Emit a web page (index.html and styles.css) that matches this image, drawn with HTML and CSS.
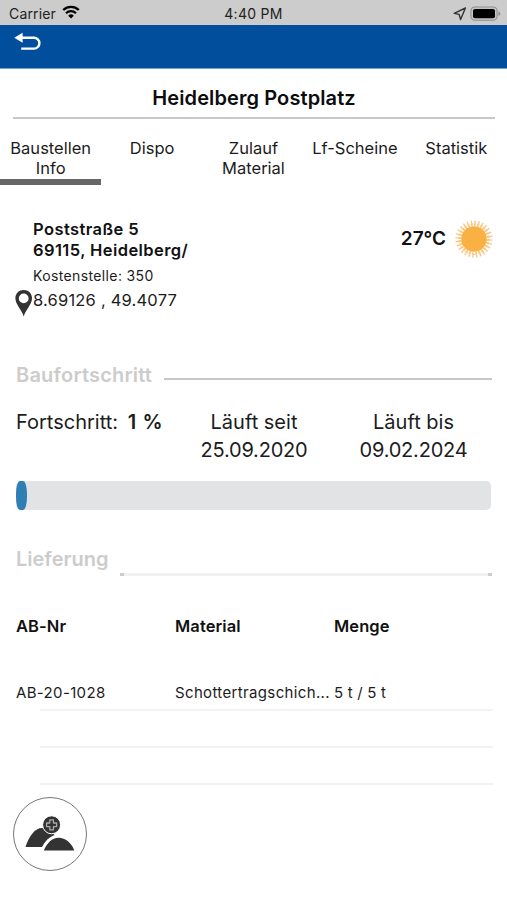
FILE: index.html
```html
<!DOCTYPE html>
<html lang="de">
<head>
    <meta charset="UTF-8">
    <meta name="viewport" content="width=device-width, initial-scale=1.0">
    <title>Heidelberg Postplatz</title>
    <link rel="stylesheet" href="styles.css">
</head>
<body>
    <div class="status-bar">
        <div class="carrier">
            <span>Carrier</span>
            <svg class="wifi" width="18" height="14" viewBox="0 0 18 14">
                <path d="M1.2 5 A11.2 11.2 0 0 1 16.8 5" fill="none" stroke="#000" stroke-width="2.3"/>
                <path d="M4 8.2 A7.2 7.2 0 0 1 14 8.2" fill="none" stroke="#000" stroke-width="2.2"/>
                <path d="M9 13.5 L6.2 10.7 A4 4 0 0 1 11.8 10.7 Z"/>
            </svg>
        </div>
        <span class="clock">4:40 PM</span>
        <div class="battery">
            <svg width="14" height="14" viewBox="0 0 14 14">
                <path d="M12.4 1 L1.2 6.4 L6.2 7.4 L7.6 12.6 Z" fill="none" stroke="#333" stroke-width="1.4" stroke-linejoin="round"/>
            </svg>
            <svg width="31" height="16" viewBox="0 0 31 16">
                <rect x="0.9" y="1" width="26.2" height="13.2" rx="4" fill="#c4c4c4" stroke="#8f8f8f" stroke-width="1.1"/>
                <rect x="3" y="3" width="22" height="9.2" rx="2"/>
                <path d="M28.4 5.2 Q30.4 6 30.4 7.6 Q30.4 9.2 28.4 10 Z" fill="#909090"/>
            </svg>
        </div>
    </div>

    <nav class="nav-bar">
        <svg width="28" height="20" viewBox="0 0 28 20">
            <path d="M0.3 5.8 L8.6 0.8 V10.8 Z" fill="#fff"/>
            <path d="M8 5.8 H20 A5.4 5.4 0 0 1 20 16.6 H7.2" fill="none" stroke="#fff" stroke-width="2.4"/>
        </svg>
    </nav>

    <h1 class="title">Heidelberg Postplatz</h1>

    <div class="tabs">
        <div class="tab active">Baustellen<br>Info</div>
        <div class="tab">Dispo</div>
        <div class="tab">Zulauf<br>Material</div>
        <div class="tab">Lf-Scheine</div>
        <div class="tab">Statistik</div>
    </div>

    <!-- Adresse und Wetter -->
    <section class="site">
        <div class="address">
            <div class="street">Poststraße 5</div>
            <div class="city">69115, Heidelberg/</div>
            <div class="cost">Kostenstelle: 350</div>
            <div class="coords">
                <svg width="18" height="28" viewBox="0 0 18 28">
                    <path fill-rule="evenodd" fill="#333" d="M8.7 0 C4 0 0.4 3.5 0.4 8.200 C0.4 14.500 6.500 19 8.700 26.500 C10.900 19 17 14.500 17 8.200 C17 3.500 13.400 0 8.700 0 Z M8.700 3.500 A4.900 4.900 0 1 1 8.700 13.300 A4.900 4.900 0 1 1 8.700 3.500 Z"/>
                </svg>
                <span>8.69126 , 49.4077</span>
            </div>
        </div>
        <div class="weather">
            <span>27°C</span>
            <svg width="40" height="40" viewBox="-20 -20 40 40">
                <circle r="14.4" pathLength="28" fill="none" stroke="#fac67c" stroke-width="3.2" stroke-dasharray="0.6 0.4"/>
                <circle r="17.2" pathLength="28" fill="none" stroke="#fac67c" stroke-width="2.8" stroke-dasharray="0.34 0.66" stroke-dashoffset="-0.13"/>
                <circle r="12.8" fill="#f9b144"/>
            </svg>
        </div>
    </section>

    <div class="heading heading-progress">
        <h2>Baufortschritt</h2>
        <span class="rule"></span>
    </div>

    <div class="progress-info">
        <div class="percent"><span>Fortschritt:</span> <b>1 %</b></div>
        <div class="date">Läuft seit<br><span>25.09.2020</span></div>
        <div class="date">Läuft bis<br><span>09.02.2024</span></div>
    </div>
    <div class="progress"><div class="progress-fill"></div></div>

    <div class="heading heading-delivery">
        <h2>Lieferung</h2>
        <span class="rule-light"></span>
    </div>

    <div class="row row-head">
        <span>AB-Nr</span>
        <span>Material</span>
        <span>Menge</span>
    </div>
    <div class="row row-item">
        <span>AB-20-1028</span>
        <span>Schottertragschich...</span>
        <span class="amount">5 t / 5 t</span>
    </div>
    <div class="line"></div>
    <div class="line"></div>
    <div class="line"></div>

    <div class="add-button">
        <svg width="50" height="38" viewBox="0 0 50 38">
            <path d="M0.500 32 C4 21 10 13 17 13 C22 13 26 16 29.500 20 C24 22 20 26 17 32 Z" fill="#333"/>
            <path d="M18.800 35.500 C22 28 27 22.800 33.500 22.800 C40.500 22.800 46.500 28 49.300 35.500 Z" fill="#333"/>
            <circle cx="26.600" cy="9.800" r="9" fill="#333" stroke="#fff" stroke-width="1"/>
            <path d="M24.8 4.800 h3.600 v3.200 h3.200 v3.600 h-3.200 v3.200 h-3.600 v-3.200 h-3.200 v-3.600 h3.200 Z" fill="none" stroke="#aaa" stroke-width="1.300" stroke-linejoin="round"/>
        </svg>
    </div>
</body>
</html>
```

FILE: styles.css
```css
* {
    box-sizing: border-box;
}

body {
    margin: 0;
    background-color: #fff;
    color: #1c1c1c;
    font-family: Inter, "Liberation Sans", sans-serif;
    height: 900px;
    overflow: hidden;
}

.status-bar {
    display: grid;
    grid-template-columns: 1fr auto 1fr;
    align-items: center;
    height: 25px;
    padding: 2px 6px 0 9px;
    background-color: #ccc;
    color: #222;
    font-size: 14px;
}

.carrier, .battery {
    display: flex;
    align-items: center;
    gap: 6px;
}

.carrier {
    letter-spacing: 0.15px;
}

.wifi {
    margin-top: -3px;
}

.clock {
    margin-left: -3px;
    letter-spacing: 0.3px;
}

.battery {
    justify-content: flex-end;
    gap: 3px;
}

.nav-bar {
    height: 44px;
    padding: 7px 14px;
    background-color: #004e9c;
    border-bottom: 1px solid #6fa0cf;
}

.title {
    height: 50px;
    margin: 0 12px 0 13px;
    border-bottom: 2px solid #c8c8c8;
    text-align: center;
    font-size: 20px;
    font-weight: 600;
    letter-spacing: 0.1px;
    line-height: 58px;
    color: #0c0c0c;
}

.tabs {
    display: grid;
    grid-template-columns: repeat(5, 1fr);
    height: 66px;
}

.tab {
    padding-top: 19px;
    text-align: center;
    font-size: 16.5px;
    line-height: 20px;
}

.tab.active {
    border-bottom: 6px solid #666;
}

.site {
    display: flex;
    justify-content: space-between;
    height: 175px;
    padding: 34px 13px 0 15px;
}

.street, .city {
    padding-left: 18px;
    font-size: 16.5px;
    font-weight: 600;
    letter-spacing: 0.42px;
    line-height: 21px;
    color: #111;
}

.cost {
    padding-left: 18px;
    font-size: 14px;
    letter-spacing: 0.37px;
    line-height: 29px;
}

.coords {
    display: flex;
    font-size: 16.5px;
    letter-spacing: 0.2px;
    line-height: 21px;
}

.weather {
    display: flex;
    gap: 8px;
    height: 40px;
    line-height: 40px;
    font-size: 19px;
    font-weight: 600;
    color: #111;
}

.heading {
    display: flex;
    padding: 0 15px 0 16px;
}

.heading h2 {
    margin: 0;
    font-size: 20px;
    font-weight: 600;
    line-height: 30px;
    color: #ccc;
}

.heading-progress {
    height: 47px;
}

.heading-progress h2 {
    letter-spacing: 0.2px;
}

.rule {
    flex: 1;
    height: 2px;
    margin: 18px 0 0 12px;
    background-color: #c8c8c8;
}

.rule-light {
    flex: 1;
    height: 3px;
    margin: 29px 0 0 12px;
    border-left: 4px solid #ccc;
    border-right: 4px solid #ccc;
    background-color: #f2f2f2;
}

.progress-info {
    display: grid;
    grid-template-columns: 158px 160px 159px;
    height: 74px;
    padding: 1px 0 0 16px;
    font-size: 20px;
    line-height: 28px;
}

.percent b {
    margin-left: 4px;
    font-weight: 600;
    letter-spacing: 0.6px;
}

.date {
    text-align: center;
}

.date span {
    letter-spacing: -0.2px;
}

.progress {
    height: 29px;
    margin: 0 16px;
    border-radius: 5px;
    background-color: #e2e3e4;
}

.progress-fill {
    width: 11px;
    height: 29px;
    border-radius: 4px / 13px;
    background-color: #2f7fb5;
}

.heading-delivery {
    height: 101px;
    padding-top: 34px;
}

.row {
    display: grid;
    grid-template-columns: 159px 159px 1fr;
    padding-left: 16px;
    white-space: nowrap;
}

.row-head {
    height: 66px;
    font-size: 16.5px;
    font-weight: 600;
    letter-spacing: 0.1px;
    line-height: 30px;
    color: #111;
}

.row-item {
    height: 32px;
    font-size: 15px;
    letter-spacing: 0.35px;
    line-height: 31px;
}

.amount {
    letter-spacing: 0.2px;
}

.line {
    height: 2px;
    margin: 0 14px 35px 40px;
    background-color: #f2f2f2;
}

.add-button {
    display: flex;
    align-items: center;
    justify-content: center;
    width: 74px;
    height: 74px;
    margin: -23px 0 0 13px;
    border: 1px solid #777;
    border-radius: 50%;
}
```
